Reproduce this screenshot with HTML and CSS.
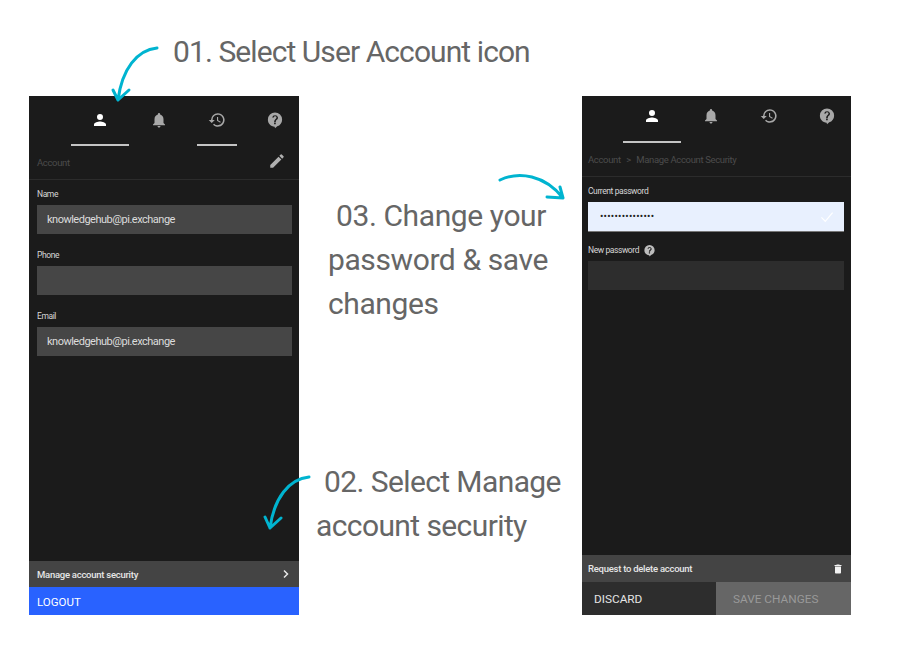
FILE: index.html
```html
<!DOCTYPE html>
<html lang="en">
<head>
<meta charset="utf-8">
<title>Account steps</title>
<link rel="stylesheet" href="styles.css">
</head>
<body>
<svg width="0" height="0" class="defs">
  <symbol id="i-user" viewBox="0 0 24 24"><path d="M12 12a4 4 0 1 0 0-8 4 4 0 0 0 0 8zm0 2c-2.700 0-8 1.300-8 4v2h16v-2c0-2.700-5.300-4-8-4z"/></symbol>
  <symbol id="i-bell" viewBox="0 0 24 24"><path d="M12 22c1.100 0 2-.9 2-2h-4c0 1.100.9 2 2 2zm6-6v-5c0-3.100-1.600-5.600-4.500-6.300V4a1.500 1.500 0 0 0-3 0v.7C7.600 5.400 6 7.900 6 11v5l-2 2v1h16v-1z"/></symbol>
  <symbol id="i-history" viewBox="0 0 24 24"><path d="M13 3a9 9 0 0 0-9 9H1l3.900 3.900.1.100 4-4H6a7 7 0 1 1 2.100 4.900l-1.400 1.400A9 9 0 1 0 13 3zm-1 5v5l4.300 2.500.7-1.200-3.500-2.100V8z"/></symbol>
  <symbol id="i-help" viewBox="0 0 24 24"><path fill-rule="evenodd" d="M12 2a9.500 9.500 0 0 0-9.500 9.500c0 5 4 9 9 9.400L12 23l3-2.600c3.800-1.300 6.500-4.800 6.500-8.900A9.500 9.500 0 0 0 12 2zm1 15.500h-2.200v-2.200H13zm2.300-6.600-.9.900c-.8.700-1.300 1.300-1.300 2.700h-2.200v-.5c0-1.100.5-2 1.300-2.800l1.200-1.200c.4-.3.600-.8.600-1.300a1.800 1.800 0 0 0-3.600 0H8.200a4 4 0 0 1 7.800 0c0 .9-.3 1.600-.7 2.200z"/></symbol>
  <symbol id="i-pencil" viewBox="0 0 24 24"><path d="M3 17.250V21h3.750L17.810 9.940l-3.750-3.750zM20.710 7.040a1 1 0 0 0 0-1.410l-2.340-2.340a1 1 0 0 0-1.410 0l-1.830 1.830 3.750 3.750z"/></symbol>
  <symbol id="i-trash" viewBox="0 0 24 24"><path d="M6 19c0 1.100.9 2 2 2h8c1.100 0 2-.9 2-2V7H6zM19 4h-3.500l-1-1h-5l-1 1H5v2h14z"/></symbol>
</svg>

<main class="canvas">
  <section class="phone">
    <nav class="tabs tabs-a">
      <div class="tab tab-user active"><svg class="ico ico-white"><use href="#i-user"/></svg></div>
      <div class="tab tab-bell"><svg class="ico"><use href="#i-bell"/></svg></div>
      <div class="tab tab-history active-short"><svg class="ico"><use href="#i-history"/></svg></div>
      <div class="tab tab-help"><svg class="ico"><use href="#i-help"/></svg></div>
    </nav>
    <header class="title-row title-a">
      <span class="crumb">Account</span>
      <svg class="ico ico-pencil"><use href="#i-pencil"/></svg>
    </header>
    <form class="form">
      <label class="label">Name</label>
      <div class="field filled">knowledgehub@pi.exchange</div>
      <label class="label">Phone</label>
      <div class="field filled"></div>
      <label class="label">Email</label>
      <div class="field filled">knowledgehub@pi.exchange</div>
    </form>
    <div class="row-link">
      <span>Manage account security</span>
      <svg class="chev" viewBox="0 0 6 10"><path d="M1 1.500 4.500 5 1 8.500" fill="none" stroke="#e8e8e8" stroke-width="1.500"/></svg>
    </div>
    <button class="logout" type="button">LOGOUT</button>
  </section>

  <section class="phone phone-b">
    <nav class="tabs tabs-b">
      <div class="tab tab-user active"><svg class="ico ico-white"><use href="#i-user"/></svg></div>
      <div class="tab tab-bell"><svg class="ico"><use href="#i-bell"/></svg></div>
      <div class="tab tab-history"><svg class="ico"><use href="#i-history"/></svg></div>
      <div class="tab tab-help"><svg class="ico"><use href="#i-help"/></svg></div>
    </nav>
    <header class="title-row title-b">
      <span class="crumb">Account<span class="sep">&gt;</span>Manage Account Security</span>
    </header>
    <form class="form form-b">
      <label class="label">Current password</label>
      <div class="field autofill">
        <span class="dots">•••••••••••••••</span>
        <svg class="check" viewBox="0 0 16 14"><path d="M1.500 7.500 6 12 14.500 2" fill="none" stroke="#fff" stroke-width="1.400"/></svg>
      </div>
      <label class="label label-help">New password <svg class="ico ico-mini"><use href="#i-help"/></svg></label>
      <div class="field dark"></div>
    </form>
    <div class="row-link row-delete">
      <span>Request to delete account</span>
      <svg class="ico ico-trash"><use href="#i-trash"/></svg>
    </div>
    <div class="actions">
      <button class="btn discard" type="button">DISCARD</button>
      <button class="btn save" type="button">SAVE CHANGES</button>
    </div>
  </section>

  <p class="note note-1">01. Select User Account icon</p>
  <p class="note note-3"><span class="indent">03. Change your</span><br>password &amp; save<br>changes</p>
  <p class="note note-2"><span class="indent">02. Select Manage</span><br>account security</p>

  <svg class="arrow arrow-1" viewBox="0 0 50 60"><path d="M46 3C26 5 11 24 7 55M2 45l5 10 11-10" fill="none" stroke="#00b4d0" stroke-width="3" stroke-linecap="round" stroke-linejoin="round"/></svg>
  <svg class="arrow arrow-2" viewBox="0 0 50 60"><path d="M46 3C26 5 11 24 7 54M2 43l5 11 11-10" fill="none" stroke="#00b4d0" stroke-width="3" stroke-linecap="round" stroke-linejoin="round"/></svg>
  <svg class="arrow arrow-3" viewBox="0 0 70 32"><path d="M3 9C22 0 48 4 66 27M50 26l16 1-3-11" fill="none" stroke="#00b4d0" stroke-width="3" stroke-linecap="round" stroke-linejoin="round"/></svg>
</main>
</body>
</html>
```
FILE: styles.css
```css
* { box-sizing: border-box; }
html, body { margin: 0; padding: 0; background: #fff; }
body { width: 900px; height: 650px; overflow: hidden; font-family: "Roboto", "Liberation Sans", sans-serif; }
.defs { position: absolute; }

.canvas {
  position: relative;
  width: 900px;
  height: 650px;
  padding: 96px 49px 35px 29px;
  display: flex;
  justify-content: space-between;
}

.phone {
  width: 270px;
  height: 519px;
  background: #1b1b1b;
  display: flex;
  flex-direction: column;
  color: #e0e0e0;
}
.phone-b { width: 269px; }

.tabs { display: flex; height: 50px; flex: none; }
.tabs-b { height: 47px; }
.tab { width: 58.400px; flex: none; display: flex; justify-content: center; align-items: flex-start; border-bottom: 2px solid transparent; padding-top: 15px; }
.tabs-b .tab { padding-top: 11px; }
.tab-user { margin-left: 42px; }
.tabs-b .tab-user { margin-left: 41px; }
.tabs-a .tab-history { width: 40px; margin-left: 9px; margin-right: 9.400px; }
.tab.active, .tab.active-short { border-bottom-color: #c4c4c4; }

.ico { width: 18px; height: 18px; fill: #a8a8a8; display: block; }
.ico-white { fill: #fff; }
.ico-pencil { width: 18px; height: 18px; fill: #b0b0b0; }
.ico-mini { width: 13px; height: 13px; fill: #bdbdbd; margin-left: 4px; }
.ico-trash { width: 12px; height: 12px; fill: #f2f2f2; }

.title-row {
  flex: none;
  display: flex;
  align-items: center;
  justify-content: space-between;
  border-bottom: 1px solid #2c2c2c;
}
.title-a { height: 34px; padding: 0 13px 4px 8px; }
.title-a .crumb { margin-top: 3px; }
.title-b { height: 34px; padding: 0 6px; }
.crumb { font-size: 9.500px; letter-spacing: -0.350px; color: #4c4c4c; }
.sep { margin: 0 5.500px; }

.form { flex: 1; padding: 9px 7px 0 8px; display: flex; flex-direction: column; }
.form-b { padding: 9px 7px 0 6px; }
.label { font-size: 8.500px; letter-spacing: -0.420px; line-height: 11px; height: 11px; color: #d6d6d6; }
.label-help { display: flex; align-items: center; }
.field {
  height: 29px;
  margin: 5px 0 16px;
  display: flex;
  align-items: center;
  justify-content: space-between;
  font-size: 11px;
  letter-spacing: -0.500px;
  padding: 0 10px;
  color: #dcdcdc;
}
.filled { background: #464646; }
.dark { background: #2d2d2d; }
.autofill { height: 30px; background: #e8f0fe; color: #333; border-bottom: 1px solid #777; margin: 5px 0 13px; padding: 0 11px 0 12px; }
.dots { font-size: 10px; letter-spacing: 0.250px; color: #222; }
.check { width: 14px; height: 12px; margin-right: -1px; }

.row-link {
  flex: none;
  height: 26px;
  background: #444;
  display: flex;
  align-items: center;
  justify-content: space-between;
  padding: 0 10px 0 8px;
  font-size: 9.500px;
  letter-spacing: -0.260px;
  font-weight: 500;
  color: #e6e6e6;
}
.row-delete { height: 27px; padding: 0 7px 0 6px; }
.chev { width: 6px; height: 10px; }

.logout {
  flex: none;
  height: 28px;
  border: 0;
  background: #2962ff;
  color: #fff;
  font: 400 11.500px "Roboto", sans-serif;
  text-align: left;
  padding: 2px 8px 0;
}

.actions { flex: none; height: 33px; display: flex; }
.btn { border: 0; font: 400 11.800px "Roboto", sans-serif; height: 33px; text-align: left; }
.discard { width: 134px; background: #2d2d2d; color: #e4e4e4; padding: 0 12px; }
.save { flex: 1; background: #666; color: #999; padding: 0 17px; }

.note {
  position: absolute;
  margin: 0;
  font-family: "Roboto", sans-serif;
  font-weight: 400;
  font-size: 30px;
  line-height: 44px;
  letter-spacing: -0.400px;
  color: #666;
  white-space: nowrap;
}
.note-1 { left: 173px; top: 30px; letter-spacing: -0.920px; }
.note-2 { left: 316px; top: 460px; letter-spacing: -0.600px; }
.note-3 { left: 328px; top: 194px; }
.indent { padding-left: 8px; }

.arrow { position: absolute; overflow: visible; }
.arrow-1 { left: 111px; top: 45px; width: 50px; height: 60px; }
.arrow-2 { left: 263px; top: 474px; width: 50px; height: 60px; }
.arrow-3 { left: 497px; top: 171px; width: 70px; height: 32px; }
```
